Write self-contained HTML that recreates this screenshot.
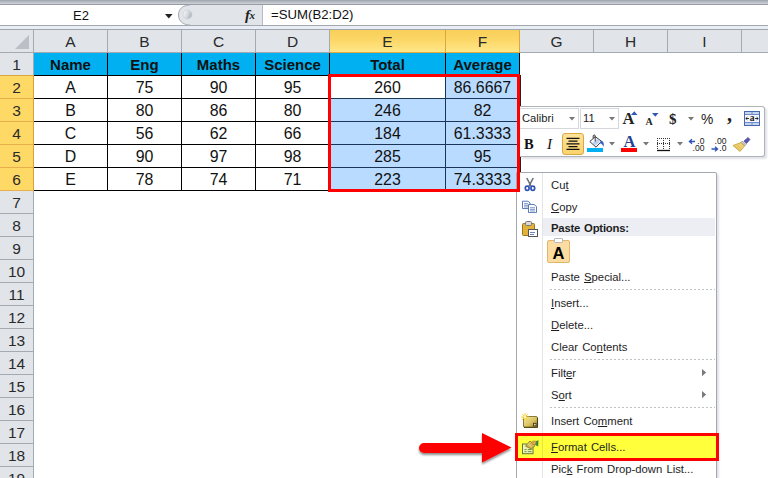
<!DOCTYPE html>
<html><head><meta charset="utf-8"><title>Excel</title>
<style>
html,body{margin:0;padding:0;}
body{width:768px;height:478px;overflow:hidden;background:#fff;position:relative;font-family:"Liberation Sans",sans-serif;color:#000;}
.abs{position:absolute;}
.topband{left:0;top:0;width:768px;height:4px;background:linear-gradient(#9fa5ad,#cfd3d9);}
.topline{left:0;top:4px;width:768px;height:1px;background:#979da5;}
.fbar{left:0;top:5px;width:768px;height:20px;background:#fff;}
.fline1{left:0;top:25px;width:768px;height:1px;background:#a3a9b1;}
.fband{left:0;top:26px;width:768px;height:3px;background:#e9edf5;}
.fline2{left:0;top:29px;width:768px;height:1px;background:#a0a6ae;}
.hdr{left:0;top:30px;width:768px;height:22px;background:#e1e5ea;}
.hdrline{left:0;top:52px;width:768px;height:1px;background:#a4aab2;}
.ch{top:30px;height:22px;line-height:23px;text-align:center;font-size:15.5px;color:#2a2a2a;box-sizing:border-box;border-right:1px solid #a4aab2;}
.ch.sel{background:linear-gradient(#f8cf58,#fcd767 45%,#ffe789);border-right:1px solid #dfa63c;top:30px;height:23px;border-bottom:1px solid #e8a93c;}
.rh{left:0;width:34px;height:23px;line-height:23px;text-align:center;font-size:15.5px;color:#2a2a2a;box-sizing:border-box;border-right:1px solid #a4aab2;border-bottom:1px solid #a4aab2;background:#e1e5ea;}
.rh.sel{background:#ffd966;border-right:1px solid #dba03a;border-bottom:1px solid #e8b04c;}
.cell{box-sizing:border-box;height:24px;line-height:24px;text-align:center;font-size:15.9px;border:1px solid #000;background:#fff;color:#111;}
.cell.h{background:#00b0f0;font-weight:bold;font-size:15px;}
.cell.s{background:#b9dbff;border-color:#1b3558;}
.redbox{box-sizing:border-box;border:3px solid #fe0000;z-index:10;}
.mi{left:551px;font-size:11.3px;word-spacing:1px;color:#1e1e1e;white-space:nowrap;height:16px;line-height:16px;}
.mi u{text-decoration:underline;text-underline-offset:1px;}
.sep{left:550px;width:165px;height:1px;background:repeating-linear-gradient(90deg,#bfc2c8 0,#bfc2c8 2px,transparent 2px,transparent 4px);}
</style></head><body>

<div class="abs topband"></div><div class="abs topline"></div><div class="abs fbar"></div><div class="abs fline1"></div><div class="abs fband"></div><div class="abs fline2"></div>
<div class="abs" style="left:73px;top:8px;font-size:13px;line-height:16px;color:#111;">E2</div>
<svg class="abs" style="left:164.500px;top:13.500px" width="9" height="6" viewBox="0 0 9 6"><path d="M0 0h7.600l-3.800 4.400z" fill="#222"/></svg>
<svg class="abs" style="left:176px;top:4px" width="90" height="23" viewBox="0 0 90 23">
<defs><linearGradient id="kn" x1="0" y1="0.300" x2="1" y2="0.700"><stop offset="0" stop-color="#f6f7f9"/><stop offset="0.450" stop-color="#d9dce1"/><stop offset="1" stop-color="#a9aeb7"/></linearGradient></defs>
<path d="M14 1 H86.5 V21 H14 C7 21 2.5 17 2.5 11 C2.5 5 7 1 14 1Z" fill="#e1e5ea"/>
<path d="M14 1 C7 1 2.500 5 2.500 11 C2.500 17 7 21 14 21" fill="none" stroke="#a3a9b1" stroke-width="1"/>
<path d="M86.5 1V21" stroke="#b4bac2" stroke-width="1"/>
<circle cx="11.500" cy="10.500" r="4.400" fill="url(#kn)" stroke="#c2c6cd" stroke-width="0.500"/>
</svg>
<div class="abs" style="left:245px;top:5px;font-family:'Liberation Serif',serif;font-style:italic;font-weight:bold;font-size:15px;line-height:20px;color:#222;letter-spacing:-0.600px;">f<span style="font-size:11px;position:relative;top:-1.500px;">x</span></div>
<div class="abs" style="left:271px;top:7px;font-size:13.2px;line-height:16px;color:#111;">=SUM(B2:D2)</div>

<div class="abs hdr"></div><div class="abs hdrline"></div>
<div class="abs" style="left:33px;top:30px;width:1px;height:22px;background:#a4aab2"></div>
<svg class="abs" style="left:14px;top:34px" width="16" height="16" viewBox="0 0 16 16"><path d="M15 1V15H1Z" fill="#bcc0c6"/></svg>
<div class="abs ch" style="left:34px;width:74px;">A</div>
<div class="abs ch" style="left:108px;width:74px;">B</div>
<div class="abs ch" style="left:182px;width:74px;">C</div>
<div class="abs ch" style="left:256px;width:74px;">D</div>
<div class="abs ch sel" style="left:330px;width:116px;">E</div>
<div class="abs ch sel" style="left:446px;width:74px;">F</div>
<div class="abs ch" style="left:520px;width:74px;">G</div>
<div class="abs ch" style="left:594px;width:74px;">H</div>
<div class="abs ch" style="left:668px;width:74px;">I</div>
<div class="abs ch" style="left:742px;width:74px;">J</div>
<div class="abs rh" style="top:53px;border-bottom-color:#dca43e;">1</div>
<div class="abs rh sel" style="top:76px;">2</div>
<div class="abs rh sel" style="top:99px;">3</div>
<div class="abs rh sel" style="top:122px;">4</div>
<div class="abs rh sel" style="top:145px;">5</div>
<div class="abs rh sel" style="top:168px;">6</div>
<div class="abs rh" style="top:191px;">7</div>
<div class="abs rh" style="top:214px;">8</div>
<div class="abs rh" style="top:237px;">9</div>
<div class="abs rh" style="top:260px;">10</div>
<div class="abs rh" style="top:283px;">11</div>
<div class="abs rh" style="top:306px;">12</div>
<div class="abs rh" style="top:329px;">13</div>
<div class="abs rh" style="top:352px;">14</div>
<div class="abs rh" style="top:375px;">15</div>
<div class="abs rh" style="top:398px;">16</div>
<div class="abs rh" style="top:421px;">17</div>
<div class="abs rh" style="top:444px;">18</div>
<div class="abs rh" style="top:467px;">19</div>
<div class="abs cell h" style="left:34px;top:53px;width:74px;border-left:none;border-top:none;height:23px;line-height:23px;">Name</div>
<div class="abs cell h" style="left:107px;top:53px;width:75px;border-top:none;height:23px;line-height:23px;">Eng</div>
<div class="abs cell h" style="left:181px;top:53px;width:75px;border-top:none;height:23px;line-height:23px;">Maths</div>
<div class="abs cell h" style="left:255px;top:53px;width:75px;border-top:none;height:23px;line-height:23px;">Science</div>
<div class="abs cell h" style="left:329px;top:53px;width:117px;border-top:none;height:23px;line-height:23px;">Total</div>
<div class="abs cell h" style="left:445px;top:53px;width:75px;border-top:none;height:23px;line-height:23px;">Average</div>
<div class="abs cell" style="left:34px;top:75px;width:74px;border-left:none;">A</div>
<div class="abs cell" style="left:107px;top:75px;width:75px;">75</div>
<div class="abs cell" style="left:181px;top:75px;width:75px;">90</div>
<div class="abs cell" style="left:255px;top:75px;width:75px;">95</div>
<div class="abs cell" style="left:329px;top:75px;width:117px;">260</div>
<div class="abs cell s" style="left:445px;top:75px;width:75px;">86.6667</div>
<div class="abs cell" style="left:34px;top:98px;width:74px;border-left:none;">B</div>
<div class="abs cell" style="left:107px;top:98px;width:75px;">80</div>
<div class="abs cell" style="left:181px;top:98px;width:75px;">86</div>
<div class="abs cell" style="left:255px;top:98px;width:75px;">80</div>
<div class="abs cell s" style="left:329px;top:98px;width:117px;">246</div>
<div class="abs cell s" style="left:445px;top:98px;width:75px;">82</div>
<div class="abs cell" style="left:34px;top:121px;width:74px;border-left:none;">C</div>
<div class="abs cell" style="left:107px;top:121px;width:75px;">56</div>
<div class="abs cell" style="left:181px;top:121px;width:75px;">62</div>
<div class="abs cell" style="left:255px;top:121px;width:75px;">66</div>
<div class="abs cell s" style="left:329px;top:121px;width:117px;">184</div>
<div class="abs cell s" style="left:445px;top:121px;width:75px;">61.3333</div>
<div class="abs cell" style="left:34px;top:144px;width:74px;border-left:none;">D</div>
<div class="abs cell" style="left:107px;top:144px;width:75px;">90</div>
<div class="abs cell" style="left:181px;top:144px;width:75px;">97</div>
<div class="abs cell" style="left:255px;top:144px;width:75px;">98</div>
<div class="abs cell s" style="left:329px;top:144px;width:117px;">285</div>
<div class="abs cell s" style="left:445px;top:144px;width:75px;">95</div>
<div class="abs cell" style="left:34px;top:167px;width:74px;border-left:none;">E</div>
<div class="abs cell" style="left:107px;top:167px;width:75px;">78</div>
<div class="abs cell" style="left:181px;top:167px;width:75px;">74</div>
<div class="abs cell" style="left:255px;top:167px;width:75px;">71</div>
<div class="abs cell s" style="left:329px;top:167px;width:117px;">223</div>
<div class="abs cell s" style="left:445px;top:167px;width:75px;">74.3333</div>
<div class="abs" style="left:520px;top:75px;width:1px;height:116px;background:#222;"></div>
<div class="abs redbox" style="left:328px;top:74px;width:192px;height:118px;"></div><div class="abs" style="left:520px;top:106px;width:245px;height:51px;box-sizing:border-box;border:1px solid #aeb2b9;border-left:none;border-radius:0 3px 3px 0;background:#fff;box-shadow:2px 2px 2px rgba(70,70,110,0.160);"></div>
<div class="abs" style="left:520px;top:108px;width:59px;height:21px;box-sizing:border-box;border:1px solid #d4d7db;border-left:none;background:#fff;"></div>
<div class="abs" style="left:522px;top:110px;font-size:11.2px;line-height:16px;color:#1a1a1a;">Calibri</div>
<div class="abs" style="left:580px;top:108px;width:39px;height:21px;box-sizing:border-box;border:1px solid #d4d7db;background:#fff;"></div>
<div class="abs" style="left:583px;top:110px;font-size:11.2px;line-height:16px;color:#1a1a1a;">11</div>

<svg class="abs" style="left:568.5px;top:117.0px" width="6" height="4" viewBox="0 0 6 4"><path d="M0 0h6l-3 3.500z" fill="#777"/></svg>
<svg class="abs" style="left:608.5px;top:117.0px" width="6" height="4" viewBox="0 0 6 4"><path d="M0 0h6l-3 3.500z" fill="#777"/></svg>
<div class="abs" style="left:622.500px;top:109.300px;font-family:'Liberation Serif',serif;font-weight:bold;font-size:16.500px;line-height:20px;color:#222;">A</div>
<svg class="abs" style="left:631px;top:111px" width="7" height="4" viewBox="0 0 7 4"><path d="M0 4h6.500l-3.250-3.700z" fill="#2f55b5"/></svg>
<div class="abs" style="left:645.500px;top:114px;font-family:'Liberation Serif',serif;font-weight:bold;font-size:10px;line-height:16px;color:#222;">A</div>
<svg class="abs" style="left:652px;top:113px" width="7" height="4" viewBox="0 0 7 4"><path d="M0 0h6.500l-3.250 3.700z" fill="#2f55b5"/></svg>
<div class="abs" style="left:669px;top:109px;font-family:'Liberation Serif',serif;font-weight:bold;font-size:15px;line-height:20px;color:#222;">$</div>
<div class="abs" style="left:701px;top:110.500px;font-size:13.800px;line-height:18px;color:#222;">%</div>
<div class="abs" style="left:727px;top:102px;font-family:'Liberation Serif',serif;font-weight:bold;font-size:20px;line-height:24px;color:#222;">,</div>

<svg class="abs" style="left:687.5px;top:117.0px" width="6" height="4" viewBox="0 0 6 4"><path d="M0 0h6l-3 3.500z" fill="#777"/></svg>
<svg class="abs" style="left:744px;top:111px" width="16" height="15" viewBox="0 0 16 15">
<rect x="0.500" y="0.500" width="15" height="14" fill="#c3d4ef" stroke="#4668b0"/>
<rect x="1" y="4" width="14" height="7" fill="#f4f7fc"/>
<path d="M1 3.500H15M1 11.500H15M8 1V3.500M8 11.500V14" stroke="#6f8cc8" stroke-width="1"/>
<text x="8" y="10.300" font-family="Liberation Serif,serif" font-weight="bold" font-size="9.500" text-anchor="middle" fill="#1a1a1a">a</text>
<path d="M1.800 7.500H5M3.300 6.200L1.800 7.500L3.300 8.800M14.200 7.500H11M12.700 6.200L14.200 7.500L12.700 8.800" stroke="#1a1a1a" stroke-width="0.900" fill="none"/>
</svg>
<div class="abs" style="left:524px;top:134px;font-family:'Liberation Serif',serif;font-weight:bold;font-size:14.5px;line-height:20px;color:#111;">B</div>
<div class="abs" style="left:547px;top:134px;font-family:'Liberation Serif',serif;font-style:italic;font-weight:normal;font-size:15px;line-height:20px;color:#111;">I</div>
<div class="abs" style="left:562px;top:133px;width:22px;height:22px;box-sizing:border-box;border:1px solid #d9a843;border-radius:3px;background:linear-gradient(#fde39a,#fbd36b);"></div>
<svg class="abs" style="left:566px;top:137px" width="14" height="14" viewBox="0 0 14 14"><path d="M0.500 1.500H13.500M2.500 4.500H11.500M0.500 7.500H13.500M2.500 10.500H11.500M0.500 13.500H13.500" stroke="#111" stroke-width="1.200" transform="scale(1,0.92)"/></svg>
<svg class="abs" style="left:587px;top:134px" width="18" height="19" viewBox="0 0 18 19">
<rect x="0" y="14" width="16" height="4" fill="#00b0f0"/>
<path d="M2.800 7.500 L8.300 2.600 L14.500 7.300 L9 13.200 Z" fill="#f4f7fc" stroke="#3a3a3a" stroke-width="1"/>
<path d="M5.500 9 L10 5 L12.800 7.300 L8.800 11.500Z" fill="#b9cff0"/>
<path d="M8.200 7.500 V2 C8.200 0.600 6.200 0.600 6.200 2 V4.300" fill="none" stroke="#3a3a3a" stroke-width="1"/>
<path d="M13.800 6.800 C16.300 6.800 17.300 9.500 16.600 12.800 C15.700 11 14.800 10 13 9.300Z" fill="#2f62c8"/>
</svg>

<svg class="abs" style="left:608.5px;top:142.0px" width="6" height="4" viewBox="0 0 6 4"><path d="M0 0h6l-3 3.500z" fill="#777"/></svg>
<svg class="abs" style="left:642.5px;top:142.0px" width="6" height="4" viewBox="0 0 6 4"><path d="M0 0h6l-3 3.500z" fill="#777"/></svg>
<svg class="abs" style="left:676.5px;top:142.0px" width="6" height="4" viewBox="0 0 6 4"><path d="M0 0h6l-3 3.500z" fill="#777"/></svg>
<div class="abs" style="left:621.500px;top:132.300px;font-family:'Liberation Serif',serif;font-weight:bold;font-size:16.500px;line-height:20px;color:#23428f;width:16px;text-align:center;">A</div>
<div class="abs" style="left:621px;top:148px;width:16px;height:4px;background:#fe0000;"></div>
<svg class="abs" style="left:656px;top:137px" width="15" height="15" viewBox="0 0 15 15">
<path d="M1 1.500H14M1 6.500H14M1.500 1V12M7.500 1V12M13.500 1V12" stroke="#333" stroke-width="1" stroke-dasharray="1 1" fill="none"/>
<path d="M1 13.500H14" stroke="#111" stroke-width="1.300"/></svg>
<svg class="abs" style="left:686px;top:134.700px" width="20" height="18" viewBox="686 134 20 18">
<text x="704.500" y="143.300" text-anchor="end" font-family="Liberation Sans,sans-serif" font-size="8.600" fill="#1a1a1a">.0</text>
<text x="704.500" y="150.200" text-anchor="end" font-family="Liberation Sans,sans-serif" font-size="8.600" fill="#1a1a1a">.00</text>
<path d="M695 140.500H690M692 138.300L689.500 140.500L692 142.700" stroke="#2f55b5" stroke-width="1.400" fill="none"/></svg>
<svg class="abs" style="left:709px;top:134.700px" width="20" height="18" viewBox="709 134 20 18">
<text x="726.500" y="143.300" text-anchor="end" font-family="Liberation Sans,sans-serif" font-size="8.600" fill="#1a1a1a">.00</text>
<text x="726.500" y="150.200" text-anchor="end" font-family="Liberation Sans,sans-serif" font-size="8.600" fill="#1a1a1a">.0</text>
<path d="M711.500 148H717M715 145.800L717.500 148L715 150.200" stroke="#2f55b5" stroke-width="1.400" fill="none"/></svg>
<svg class="abs" style="left:732px;top:136px" width="19" height="17" viewBox="0 0 19 17">
<path d="M12 5 L16 1.500 L18 3.500 L14.500 7.500Z" fill="#5a55b0" stroke="#3d3a86" stroke-width="0.600"/>
<path d="M10.500 5 L14 8.500 L12.500 10 L9 6.500Z" fill="#c9ccd2" stroke="#777" stroke-width="0.600"/>
<path d="M9 6.500 L12.500 10 L8 15.500 L1 9.500 Z" fill="#f0d070" stroke="#b8952e" stroke-width="0.700"/>
<path d="M3 10 L8 14.500M5 9L9.500 13" stroke="#d4b048" stroke-width="0.700"/>
</svg>

<div class="abs" style="left:516px;top:172px;width:201px;height:320px;box-sizing:border-box;border:1px solid #a3a7ae;border-radius:0 2px 0 0;background:#fff;box-shadow:2px 2px 2px rgba(70,70,110,0.160);"></div>
<div class="abs" style="left:542px;top:173px;width:1px;height:310px;background:#e2e4e8;"></div>
<div class="abs" style="left:543px;top:218px;width:172px;height:18px;background:#eceef3;"></div>

<div class="abs mi" style="top:177px;">Cu<u>t</u></div>
<div class="abs mi" style="top:199px;"><u>C</u>opy</div>
<div class="abs mi" style="top:220px;font-weight:bold;letter-spacing:-0.2px;">Paste Options:</div>
<div class="abs mi" style="top:269px;">Paste <u>S</u>pecial...</div>
<div class="abs mi" style="top:295px;"><u>I</u>nsert...</div>
<div class="abs mi" style="top:317px;"><u>D</u>elete...</div>
<div class="abs mi" style="top:339px;">Clear Co<u>n</u>tents</div>
<div class="abs mi" style="top:365px;">Filt<u>e</u>r</div>
<div class="abs mi" style="top:387px;">S<u>o</u>rt</div>
<div class="abs mi" style="top:413px;">Insert Co<u>m</u>ment</div>
<div class="abs mi" style="top:461px;">Pic<u>k</u> From Drop-down List...</div>
<div class="abs sep" style="top:289px;"></div>
<div class="abs sep" style="top:359px;"></div>
<div class="abs sep" style="top:407px;"></div>
<svg class="abs" style="left:702px;top:368.7px" width="5" height="8" viewBox="0 0 5 8"><path d="M0 0L4.200 3.600L0 7.200Z" fill="#7a7a7a"/></svg>
<svg class="abs" style="left:702px;top:390.7px" width="5" height="8" viewBox="0 0 5 8"><path d="M0 0L4.200 3.600L0 7.200Z" fill="#7a7a7a"/></svg>
<div class="abs" style="left:547px;top:240px;width:23px;height:23px;box-sizing:border-box;border:1px solid #e2b66b;border-radius:2px;background:#fcdca0;"></div>
<div class="abs" style="left:554px;top:238px;width:9px;height:5px;box-sizing:border-box;border:1px solid #b9bcc2;background:#fff;border-radius:1px;"></div>
<div class="abs" style="left:547px;top:244px;width:23px;text-align:center;font-weight:bold;font-size:16.5px;line-height:18px;color:#000;">A</div>

<svg class="abs" style="left:524px;top:177px" width="12" height="15" viewBox="0 0 12 15">
<path d="M2.800 1 L7.200 9.500M9.200 1 L4.800 9.500" stroke="#6a6f78" stroke-width="1.600" fill="none"/>
<ellipse cx="3.200" cy="11.300" rx="1.900" ry="2.100" fill="none" stroke="#2f55b5" stroke-width="1.700"/>
<ellipse cx="8.800" cy="11.300" rx="1.900" ry="2.100" fill="none" stroke="#2f55b5" stroke-width="1.700"/></svg>
<svg class="abs" style="left:522px;top:200px" width="16" height="13" viewBox="0 0 16 16" preserveAspectRatio="none">
<path d="M0.500 1.500H6L8 3.500V10.500H0.500Z" fill="#fff" stroke="#4a6cb3" stroke-width="1"/>
<path d="M2 4.500H6M2 6.500H6M2 8.500H6" stroke="#4a6cb3" stroke-width="0.800"/>
<path d="M6.500 5.500H12L14.500 8V15.500H6.500Z" fill="#fff" stroke="#4a6cb3" stroke-width="1"/>
<path d="M8 9.500H13M8 11.500H13M8 13.500H13" stroke="#4a6cb3" stroke-width="0.800"/></svg>
<svg class="abs" style="left:522px;top:221px" width="17" height="17" viewBox="0 0 17 17">
<rect x="0.500" y="2.500" width="12" height="12" rx="1" fill="#e3b23c" stroke="#9a7420"/>
<rect x="3.500" y="0.500" width="6" height="4" rx="1" fill="#d9d9d9" stroke="#777"/>
<rect x="6.500" y="8.500" width="9" height="7" fill="#fff" stroke="#555"/>
<path d="M8 11.500H13M8 13.500H12" stroke="#4a6cb3" stroke-width="0.800"/></svg>
<svg class="abs" style="left:520px;top:412px" width="20" height="18" viewBox="520 412 20 18">
<defs><linearGradient id="cm" x1="0" y1="0" x2="1" y2="1"><stop offset="0" stop-color="#f6ecae"/><stop offset="0.550" stop-color="#d9c25e"/><stop offset="1" stop-color="#8f7a28"/></linearGradient></defs>
<rect x="523.500" y="416.500" width="14" height="11" rx="1.500" fill="url(#cm)" stroke="#6e5d1c" stroke-width="0.800"/>
<path d="M524 427.300H537.500V418" stroke="#4a3e12" stroke-width="1.100" fill="none"/>
<rect x="533.500" y="423.300" width="2.600" height="2.600" fill="#d8d2b0" stroke="#3c3212" stroke-width="0.800"/>
<path d="M525 413.200V420.800M521.200 417H528.800M522.300 414.300L527.700 419.700M527.700 414.300L522.300 419.700" stroke="#f7d028" stroke-width="1"/>
<circle cx="525" cy="417" r="1.300" fill="#fff6b8"/></svg>

<div class="abs" style="left:515px;top:433px;width:204px;height:28px;box-sizing:border-box;border:3px solid #fe0000;background:#ffff3b;"></div>
<div class="abs" style="left:542px;top:436px;width:1px;height:22px;background:#e6e640;"></div>
<div class="abs mi" style="top:439px;"><u>F</u>ormat Cells...</div>
<svg class="abs" style="left:520px;top:438px" width="20" height="18" viewBox="520 438 20 18">
<rect x="522.500" y="444" width="10.500" height="9.700" fill="#eef2b4" stroke="#5c7a3a" stroke-width="1"/>
<path d="M524.500 449.500H526.500M527.800 449.500H531.500M524.500 451.600H526.500M527.800 451.600H531.500" stroke="#6f9440" stroke-width="1"/>
<path d="M525.500 446.200 L530 441 L534.800 446 L531.500 449 Z" fill="#cdb24a" stroke="#7a6420" stroke-width="0.700"/>
<path d="M527.500 445L530 442.500M529 446.500L532 443.500M528 443.500L531.500 447M530 442L533.500 446" stroke="#f2e48a" stroke-width="0.700"/>
<ellipse cx="534.300" cy="442.800" rx="2.900" ry="1.900" fill="#e0a848" stroke="#9a6a22" stroke-width="0.500"/>
<path d="M536.200 441 L538.500 440.300 L538.200 446.500 L535.200 445Z" fill="#3f8a3a"/></svg>

<svg class="abs" style="left:410px;top:425px;overflow:visible" width="110" height="50" viewBox="410 425 110 50">
<defs><filter id="sh" x="-10%" y="-20%" width="120%" height="150%"><feGaussianBlur in="SourceAlpha" stdDeviation="1.200"/><feOffset dx="0" dy="2"/><feComponentTransfer><feFuncA type="linear" slope="0.450"/></feComponentTransfer><feMerge><feMergeNode/><feMergeNode in="SourceGraphic"/></feMerge></filter></defs>
<path d="M424 443 H482 V433 L511.500 447.500 L482 462.500 V453 H424 A5 5 0 0 1 424 443Z" fill="#fe0000" filter="url(#sh)"/></svg>

</body></html>
